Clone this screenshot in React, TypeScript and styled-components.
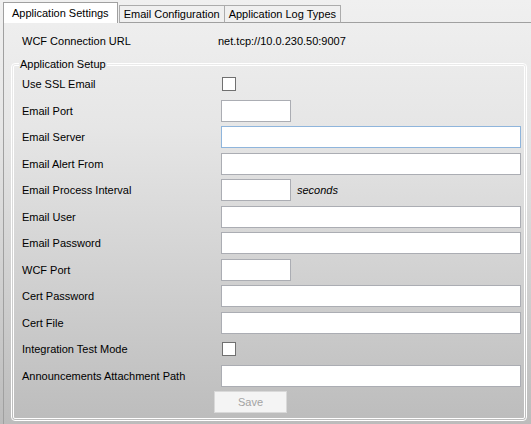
import React from "react";
import styled, { createGlobalStyle } from "styled-components";

const Global = createGlobalStyle`
  html, body { margin: 0; padding: 0; }
  body { font-family: "Liberation Sans", Arial, sans-serif; font-size: 11px; color: #000; }
`;

const Window = styled.div`
  width: 531px;
  height: 424px;
  overflow: hidden;
  background: linear-gradient(#f0f0f0 0%, #e6e6e6 30%, #bcbcbc 100%);
  display: flex;
  flex-direction: column;
`;

const TabStrip = styled.div`
  display: flex;
  align-items: flex-end;
  height: 23px;
  padding-left: 3px;
  flex-shrink: 0;
`;

const Tab = styled.div<{ $active?: boolean }>`
  box-sizing: border-box;
  display: flex;
  align-items: center;
  padding: 0 ${(p) => (p.$active ? "8px" : "4px")};
  height: ${(p) => (p.$active ? "21px" : "18px")};
  border: 1px solid ${(p) => (p.$active ? "#a0a0a0" : "#acacac")};
  border-bottom: ${(p) => (p.$active ? "none" : "1px solid #a0a0a0")};
  margin-left: ${(p) => (p.$active ? "0" : "-1px")};
  background: ${(p) => (p.$active ? "#ffffff" : "#f0f0f0")};
  white-space: nowrap;
  line-height: 13px;
  &:first-child { margin-left: 0; }
`;

const TabActiveFollow = styled(Tab)`
  margin-left: 1px;
`;

const StripFill = styled.div`
  flex: 1;
  border-bottom: 1px solid #a0a0a0;
`;

const Page = styled.div`
  flex: 1;
  margin-left: 3px;
  border-left: 1px solid #a0a0a0;
  padding: 0 5px 0 7px;
  display: flex;
  flex-direction: column;
`;

const ConnectionRow = styled.div`
  display: grid;
  grid-template-columns: 196px auto;
  align-items: center;
  height: 22px;
  margin-top: 7px;
  padding-left: 11px;
`;

const GroupBox = styled.fieldset`
  margin: 6px 0 0 0;
  padding: 0 0 2px 8px;
  border: 3px double #ffffff;
  border-radius: 4px;
  min-width: 0;
  box-sizing: border-box;
  width: 516px;
`;

const Legend = styled.legend`
  margin-left: -3px;
  padding: 0 1px;
  line-height: 13px;
  font-size: 11px;
`;

const FormGrid = styled.div`
  display: grid;
  grid-template-columns: 199px 1fr;
  grid-auto-rows: 26.5px;
  align-items: center;
`;

const Label = styled.span`
  white-space: nowrap;
`;

const Field = styled.div`
  display: flex;
  align-items: center;
  gap: 6px;
`;

const TextBox = styled.div<{ $short?: boolean; $focused?: boolean }>`
  box-sizing: border-box;
  width: ${(p) => (p.$short ? "70px" : "300px")};
  height: 22px;
  background: #ffffff;
  border: 1px solid ${(p) => (p.$focused ? "#8fb5dc" : "#abadb3")};
`;

const CheckBox = styled.div`
  box-sizing: border-box;
  width: 14px;
  height: 14px;
  margin-left: 1px;
  background: #ffffff;
  border: 1px solid #707070;
`;

const Hint = styled.span`
  font-style: italic;
`;

const SaveRow = styled.div`
  grid-column: 2;
  height: 24px;
  display: flex;
  align-items: center;
`;

const SaveButton = styled.div`
  box-sizing: border-box;
  margin-left: -7px;
  width: 73px;
  height: 22px;
  background: #f4f4f4;
  border: 1px solid #d9d9d9;
  color: #a3a3a3;
  display: flex;
  align-items: center;
  justify-content: center;
`;

type Row =
  | { label: string; kind: "check" }
  | { label: string; kind: "text"; short?: boolean; focused?: boolean; hint?: string };

const rows: Row[] = [
  { label: "Use SSL Email", kind: "check" },
  { label: "Email Port", kind: "text", short: true },
  { label: "Email Server", kind: "text", focused: true },
  { label: "Email Alert From", kind: "text" },
  { label: "Email Process Interval", kind: "text", short: true, hint: "seconds" },
  { label: "Email User", kind: "text" },
  { label: "Email Password", kind: "text" },
  { label: "WCF Port", kind: "text", short: true },
  { label: "Cert Password", kind: "text" },
  { label: "Cert File", kind: "text" },
  { label: "Integration Test Mode", kind: "check" },
  { label: "Announcements Attachment Path", kind: "text" },
];

export default function App() {
  return (
    <>
      <Global />
      <Window>
        <TabStrip>
          <Tab $active>Application Settings</Tab>
          <TabActiveFollow>Email Configuration</TabActiveFollow>
          <Tab>Application Log Types</Tab>
          <StripFill />
        </TabStrip>
        <Page>
          <ConnectionRow>
            <Label>WCF Connection URL</Label>
            <span>net.tcp://10.0.230.50:9007</span>
          </ConnectionRow>
          <GroupBox>
            <Legend>Application Setup</Legend>
            <FormGrid>
              {rows.map((r) => (
                <React.Fragment key={r.label}>
                  <Label>{r.label}</Label>
                  <Field>
                    {r.kind === "check" ? (
                      <CheckBox />
                    ) : (
                      <>
                        <TextBox $short={r.short} $focused={r.focused} />
                        {r.hint && <Hint>{r.hint}</Hint>}
                      </>
                    )}
                  </Field>
                </React.Fragment>
              ))}
              <SaveRow>
                <SaveButton>Save</SaveButton>
              </SaveRow>
            </FormGrid>
          </GroupBox>
        </Page>
      </Window>
    </>
  );
}
